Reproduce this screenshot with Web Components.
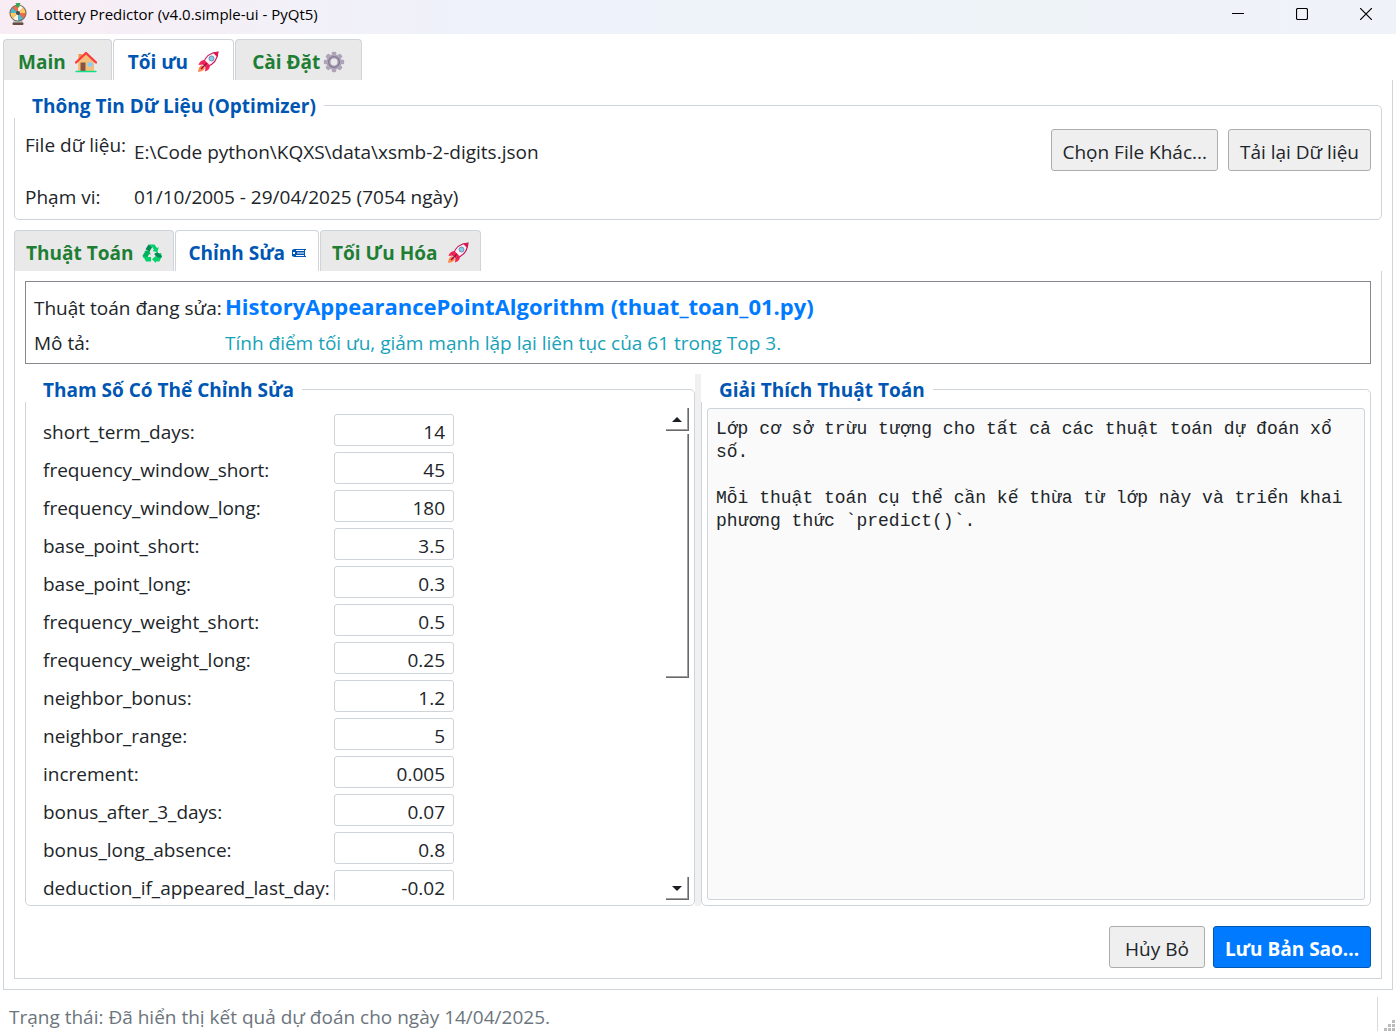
<!DOCTYPE html>
<html lang="vi">
<head>
<meta charset="utf-8">
<title>Lottery Predictor (v4.0.simple-ui - PyQt5)</title>
<style>
  html, body { height: 100%; margin: 0; }
  body {
    font: 19px/26px "Open Sans", "Noto Sans", sans-serif;
    color: #212529;
    background: #fff;
    --line: #ced4da;
    --accent: #0056b3;
    overflow: hidden;
  }
</style>
</head>
<body>
<lottery-app></lottery-app>

<script>
const ICONS = {
  wheel: [22, 22, `
    <path d="M7 16.500h8l1 3.500H6z" fill="#b5c3ca"/><rect x="5.500" y="19.500" width="11" height="2.500" rx="1" fill="#6b4a3f"/>
    <circle cx="11" cy="10" r="8.600" fill="#7d6a62"/>
    <path d="M11 10V2.500a7.500 7.500 0 0 1 5.300 2.200z" fill="#fff3e0"/>
    <path d="M11 10l5.300-5.300a7.500 7.500 0 0 1 2.200 5.300z" fill="#ffca5f"/>
    <path d="M11 10h7.500a7.500 7.500 0 0 1-2.200 5.300z" fill="#ef6a4a"/>
    <path d="M11 10l5.300 5.300a7.500 7.500 0 0 1-5.300 2.200z" fill="#4fb9c9"/>
    <path d="M11 10v7.500a7.500 7.500 0 0 1-5.300-2.200z" fill="#fff3e0"/>
    <path d="M11 10l-5.300 5.300A7.500 7.500 0 0 1 3.500 10z" fill="#ffca5f"/>
    <path d="M11 10H3.500a7.500 7.500 0 0 1 2.200-5.300z" fill="#4fb9c9"/>
    <path d="M11 10L5.700 4.700A7.500 7.500 0 0 1 11 2.500z" fill="#ef6a4a"/>
    <circle cx="11" cy="10" r="2" fill="#37515c"/><path d="M8.500 0h5L12 4.500h-2z" fill="#35a853"/>`],
  house: [22, 22, `
    <path d="M3 10.500L11 3l8 7.500V20H3z" fill="#f3c07b"/>
    <rect x="5.500" y="11.500" width="5" height="8.500" fill="#8a5240"/>
    <rect x="12.500" y="11.500" width="5" height="4" fill="#84cfff"/>
    <path d="M3.500 3h3.500v4L3.500 9z" fill="#f3963f"/>
    <path d="M1 11.500L11 2l10 9.500" fill="none" stroke="#fb3b3b" stroke-width="2.400" stroke-linejoin="round" stroke-linecap="round"/>
    <path d="M1 20.500h20" stroke="#0fe08b" stroke-width="1.400" stroke-linecap="round"/>`],
  rocket: [22, 22, `
    <path d="M5 14l3 3c-1 2.500-3 3.500-7 4 .2-3.500 1.500-6 4-7z" fill="#ff8a50"/>
    <path d="M8 9c-3.500 0-5.500 1.500-6.500 5l5-.5zM13 14c0 3.500-1.500 5.500-5 6.500l.5-5z" fill="#f4265a"/>
    <path d="M6 12.500C8 6.500 13 1.500 21 1c-.5 8-5.500 13-11.500 15z" fill="#fbf3f7" stroke="#c2185b" stroke-width="1.200"/>
    <path d="M6 12.500l1.500-3.500 5.500 5.500L9.500 16z" fill="#f4265a"/>
    <path d="M16 1.800C17.600 1.200 19.500 1 21 1c0 1.500-.2 3.400-.8 5z" fill="#d81b50"/>
    <circle cx="14.500" cy="7.500" r="2.500" fill="#86ccec" stroke="#64809a" stroke-width=".8"/>
    <path d="M4.500 17.500l5-5" stroke="#a0123c" stroke-width="1.600" stroke-linecap="round"/>`],
  gear: [22, 22, `
    <g fill="#ada4b8"><circle cx="11" cy="11" r="7.500"/>
    <rect x="8.700" y=".8" width="4.600" height="20.400" rx="1.400"/><rect x=".8" y="8.700" width="20.400" height="4.600" rx="1.400"/>
    <g transform="rotate(45 11 11)"><rect x="8.700" y=".8" width="4.600" height="20.400" rx="1.400"/><rect x=".8" y="8.700" width="20.400" height="4.600" rx="1.400"/></g></g>
    <circle cx="11" cy="11" r="5.400" fill="none" stroke="#857a95" stroke-width="1.300"/>
    <circle cx="11" cy="11" r="3.400" fill="#e9e9e9"/>`],
  recycle: [20, 20, `
    <path d="M6.500 1.500h6L15 5l1.800-.8-1.500 5-5-1.200L12 7l-1.800-3z" fill="#00d26a"/>
    <path d="M6.500 1.500L3.500 6.300l4 2.400L10.200 4z" fill="#008a55"/>
    <path d="M2.200 8l5-.8 1.500 4.500-1.600-.8L5.500 14.500H1L.6 12.500l2.600-4z" fill="#00b15d"/>
    <path d="M1 13l3 5.500h5V14H4.500z" fill="#00d26a"/>
    <path d="M15.200 10.500l3.800-.5.800 3.500-2.500 5H14v1.500l-4-3.700 4-3.600v1.600h2.300z" fill="#00d26a"/>
    <path d="M15.200 9l-3 2 2.800 3.500h4.500l.3-1.500z" fill="#008a55"/>`],
  pencil: [14, 10, `
    <path d="M2 1h12v1h-1v6h1v1H2L0 8V2z" fill="#0056b3"/>
    <path d="M1 4h2v2H1zM4 2h8v1H4zM5 4h7v2H5zM4 7h8v1H4z" fill="#fff"/>
    <path d="M5 4.500h7v1H5z" fill="#0056b3"/>`],
  minimize: [12, 12, `<path d="M0 5.500h12" stroke="#000"/>`],
  maximize: [12, 12, `<rect x=".5" y=".5" width="11" height="11" rx="1.500" fill="none" stroke="#000" stroke-width="1.200"/>`],
  close: [12, 12, `<path d="M0 0l12 12M12 0L0 12" stroke="#000" stroke-width="1.200"/>`],
  up: [10, 5, `<path d="M5 0l5 5H0z" fill="#1b1f23"/>`],
  down: [10, 5, `<path d="M5 5L0 0h10z" fill="#1b1f23"/>`],
  grip: [12, 12, `<path d="M8 1h3v3H8zM4 5h3v3H4zM8 5h3v3H8zM0 9h3v3H0zM4 9h3v3H4zM8 9h3v3H8z" fill="#bcbcbc"/>`]
};

function define(name, html, setup) {
  const template = document.createElement('template');
  template.innerHTML = '<style>*{box-sizing:border-box}:host{box-sizing:border-box}[hidden]{display:none}</style>' + html;
  customElements.define(name, class extends HTMLElement {
    connectedCallback() {
      if (this.shadowRoot) return;
      this.attachShadow({ mode: 'open' }).append(template.content.cloneNode(true));
      if (setup) setup(this, this.shadowRoot);
    }
  });
}

define('ui-icon', `<style>:host{display:inline-flex;flex:none} svg{display:block}</style>`, (host, root) => {
  const [w, h, body] = ICONS[host.getAttribute('name')];
  const holder = document.createElement('template');
  holder.innerHTML = `<svg aria-hidden="true" width="${w}" height="${h}" viewBox="0 0 ${w} ${h}">${body}</svg>`;
  root.append(holder.content);
});

define('title-bar', `
<style>
  :host { display: flex; align-items: center; height: 34px; flex: none; padding: 0 0 6px 7px; gap: 7px;
    background: linear-gradient(90deg, #f9edf5, #eef2fa 35%, #eef3f8 75%, #f0f2fa); }
  h1 { flex: 1; margin: 0; font-size: 15px; font-weight: 400; line-height: 20px; color: #000; }
  nav { display: flex; gap: 4px; }
  button { width: 60px; height: 28px; border: 0; padding: 0; background: none; display: grid; place-items: center; }
</style>
<ui-icon name="wheel"></ui-icon>
<h1><slot></slot></h1>
<nav>
  <button aria-label="Minimize"><ui-icon name="minimize"></ui-icon></button>
  <button aria-label="Maximize"><ui-icon name="maximize"></ui-icon></button>
  <button aria-label="Close"><ui-icon name="close"></ui-icon></button>
</nav>`);

define('tab-item', `
<style>
  :host { display: block; }
  button { display: flex; align-items: center; gap: var(--tab-gap, 9px); height: 41px; width: 100%;
    padding: 4px var(--tab-pad, 14px) 0; border: 1px solid var(--line); border-bottom: 0;
    border-radius: 4px 4px 0 0; background: #e9e9e9; color: #1e7e34; font: inherit; font-weight: 700; }
  :host([selected]) button { background: #fff; color: var(--accent); }
</style>
<button role="tab"><slot></slot></button>`, (host, root) => {
  root.querySelector('button').setAttribute('aria-selected', host.hasAttribute('selected'));
});

define('tab-pane', `
<style>
  :host { display: flex; flex-direction: column; flex: 1; min-height: 0; }
  .tabs { display: flex; gap: 1px; flex: none; }
  .page { flex: 1; min-height: 0; display: flex; flex-direction: column; gap: 10px; padding: 10px;
    border: 1px solid var(--line); border-top: 0; }
</style>
<div class="tabs" role="tablist"><slot name="tab"></slot></div>
<div class="page"><slot></slot></div>`);

define('group-box', `
<style>
  :host { display: flex; flex-direction: column; padding-top: 2px; min-height: 0; min-width: 0; }
  h2 { align-self: flex-start; margin: 0 0 -13px; padding: 2px 8px 0 18px; font-size: 19px; line-height: 24px;
    font-weight: 700; color: var(--accent); background: #fff; z-index: 1; }
  .frame { flex: 1; min-height: 0; display: flex; flex-direction: column; border: 1px solid var(--line);
    border-radius: 5px; padding: var(--group-pad, 18px 5px 5px); }
</style>
<h2></h2>
<div class="frame"><slot></slot></div>`, (host, root) => {
  root.querySelector('h2').textContent = host.getAttribute('heading');
});

define('push-button', `
<style>
  :host { display: block; }
  button { height: 42px; width: 100%; padding: 3px 10px 0; border: 1px solid #adadad; border-radius: 3px;
    background: #efefef; color: #212529; font: inherit; white-space: nowrap; }
  :host([primary]) button { background: #007bff; border-color: var(--accent); color: #fff; font-weight: 700; }
</style>
<button><slot></slot></button>`);

define('data-info', `
<style>
  :host { display: grid; grid-template-columns: 99px 1fr auto; column-gap: 10px; row-gap: 13px; white-space: nowrap; }
  .name { line-height: 32px; }
  .path { line-height: 42px; padding-top: 2px; height: 42px; }
  .actions { display: flex; gap: 10px; }
  push-button { min-width: 143px; }
</style>
<span class="name">File dữ liệu:</span>
<span class="path">E:\\Code python\\KQXS\\data\\xsmb-2-digits.json</span>
<div class="actions"><push-button>Chọn File Khác...</push-button><push-button>Tải lại Dữ liệu</push-button></div>
<span>Phạm vi:</span>
<span>01/10/2005 - 29/04/2025 (7054 ngày)</span>`);

define('algorithm-card', `
<style>
  :host { display: grid; flex: none; grid-template-columns: 187px 1fr; gap: 8px 4px; align-items: baseline;
    border: 1px solid #85888d; padding: 8px 8px 6px; white-space: nowrap; }
  span { line-height: 27px; }
  strong { font-size: 22px; line-height: 32px; color: #007bff; }
  .about { color: #17a2b8; }
</style>
<span>Thuật toán đang sửa:</span><strong>HistoryAppearancePointAlgorithm (thuat_toan_01.py)</strong>
<span>Mô tả:</span><span class="about">Tính điểm tối ưu, giảm mạnh lặp lại liên tục của 61 trong Top 3.</span>`);

define('scroll-bar', `
<style>
  :host { display: flex; flex-direction: column; width: 23px; flex: none; }
  button, .thumb { border: 0 solid #696969; border-width: 0 1px 1px 0; box-shadow: inset -1px -1px #a0a0a0; background: #fff; }
  button { height: 23px; padding: 0; flex: none; display: grid; place-items: center; }
  .track { flex: 1; display: flex; flex-direction: column; padding-top: 3px; }
  .thumb { height: 55%; }
</style>
<button aria-label="Scroll up"><ui-icon name="up"></ui-icon></button>
<div class="track"><div class="thumb"></div></div>
<button aria-label="Scroll down"><ui-icon name="down"></ui-icon></button>`);

const PARAMS = [
  ['short_term_days', '14'], ['frequency_window_short', '45'], ['frequency_window_long', '180'],
  ['base_point_short', '3.5'], ['base_point_long', '0.3'], ['frequency_weight_short', '0.5'],
  ['frequency_weight_long', '0.25'], ['neighbor_bonus', '1.2'], ['neighbor_range', '5'],
  ['increment', '0.005'], ['bonus_after_3_days', '0.07'], ['bonus_long_absence', '0.8'],
  ['deduction_if_appeared_last_day', '-0.02']
];

define('param-list', `
<style>
  :host { display: flex; flex: 1; min-height: 0; }
  .rows { flex: 1; min-width: 0; overflow: hidden; display: grid; grid-template-columns: 287px 120px;
    grid-auto-rows: 32px; gap: 6px 4px; justify-content: start; align-content: start; padding: 6px 12px 0; }
  label { line-height: 32px; padding-top: 2px; }
  input { width: 100%; height: 32px; border: 1px solid var(--line); border-radius: 3px; padding: 4px 8px 0;
    font: inherit; color: inherit; text-align: right; background: #fff; }
</style>
<div class="rows"></div>
<scroll-bar></scroll-bar>`, (host, root) => {
  const rows = root.querySelector('.rows');
  for (const [name, value] of PARAMS) {
    const label = document.createElement('label');
    label.htmlFor = name;
    label.textContent = name + ':';
    const input = document.createElement('input');
    input.id = name;
    input.value = value;
    rows.append(label, input);
  }
});

define('doc-view', `
<style>
  :host { display: flex; flex: 1; min-height: 0; }
  textarea { flex: 1; min-width: 0; resize: none; border: 1px solid var(--line); border-radius: 3px;
    background: #fafafa; color: #212529; padding: 9px 8px; outline: 0; overflow: hidden;
    font: 18px/23px "Liberation Mono", "DejaVu Sans Mono", monospace; }
</style>
<textarea readonly aria-label="Giải Thích Thuật Toán"></textarea>`, (host, root) => {
  root.querySelector('textarea').value =
    'Lớp cơ sở trừu tượng cho tất cả các thuật toán dự đoán xổ số.\n\n' +
    'Mỗi thuật toán cụ thể cần kế thừa từ lớp này và triển khai phương thức `predict()`.';
});

define('split-view', `
<style>
  :host { display: grid; flex: 1; min-height: 0; grid-template-columns: 1fr 6px 1fr; grid-template-rows: minmax(0, 1fr); }
  .handle { background: #f0f0f0; }
</style>
<slot name="left"></slot><div class="handle"></div><slot name="right"></slot>`);

define('status-bar', `
<style>
  :host { display: flex; flex: none; height: 41px; padding: 7px 0 0 9px; }
  p { flex: 1; margin: 0; padding-top: 7px; color: #6c757d; }
  .grip { width: 19px; border-left: 1px solid #d9d9d9; display: flex; align-items: flex-end; justify-content: flex-end; }
</style>
<p><slot></slot></p>
<div class="grip"><ui-icon name="grip"></ui-icon></div>`);

define('lottery-app', `
<style>
  :host { display: flex; flex-direction: column; height: 100vh; }
  .main { margin: 5px 3px 0; }
  .info { --group-pad: 23px 10px 9px; flex: none; }
  .sub { --tab-pad: 11px; }
  .tight { --tab-gap: 3px; --tab-pad: 16px; }
  .pen { --tab-gap: 7px; --tab-pad: 12px; }
  .buttons { display: flex; justify-content: flex-end; gap: 8px; padding-top: 10px; }
  .cancel { min-width: 96px; }
  .save { min-width: 158px; }
</style>
<title-bar>Lottery Predictor (v4.0.simple-ui - PyQt5)</title-bar>
<tab-pane class="main">
  <tab-item slot="tab">Main<ui-icon name="house"></ui-icon></tab-item>
  <tab-item slot="tab" selected>Tối ưu<ui-icon name="rocket"></ui-icon></tab-item>
  <tab-item slot="tab" class="tight">Cài Đặt<ui-icon name="gear"></ui-icon></tab-item>
  <group-box class="info" heading="Thông Tin Dữ Liệu (Optimizer)"><data-info></data-info></group-box>
  <tab-pane class="sub">
    <tab-item slot="tab">Thuật Toán<ui-icon name="recycle"></ui-icon></tab-item>
    <tab-item slot="tab" class="pen" selected>Chỉnh Sửa<ui-icon name="pencil"></ui-icon></tab-item>
    <tab-item slot="tab">Tối Ưu Hóa<ui-icon name="rocket"></ui-icon></tab-item>
    <algorithm-card></algorithm-card>
    <split-view>
      <group-box slot="left" heading="Tham Số Có Thể Chỉnh Sửa"><param-list></param-list></group-box>
      <group-box slot="right" heading="Giải Thích Thuật Toán"><doc-view></doc-view></group-box>
    </split-view>
    <div class="buttons">
      <push-button class="cancel">Hủy Bỏ</push-button>
      <push-button class="save" primary>Lưu Bản Sao...</push-button>
    </div>
  </tab-pane>
</tab-pane>
<status-bar>Trạng thái: Đã hiển thị kết quả dự đoán cho ngày 14/04/2025.</status-bar>`);
</script>
</body>
</html>
